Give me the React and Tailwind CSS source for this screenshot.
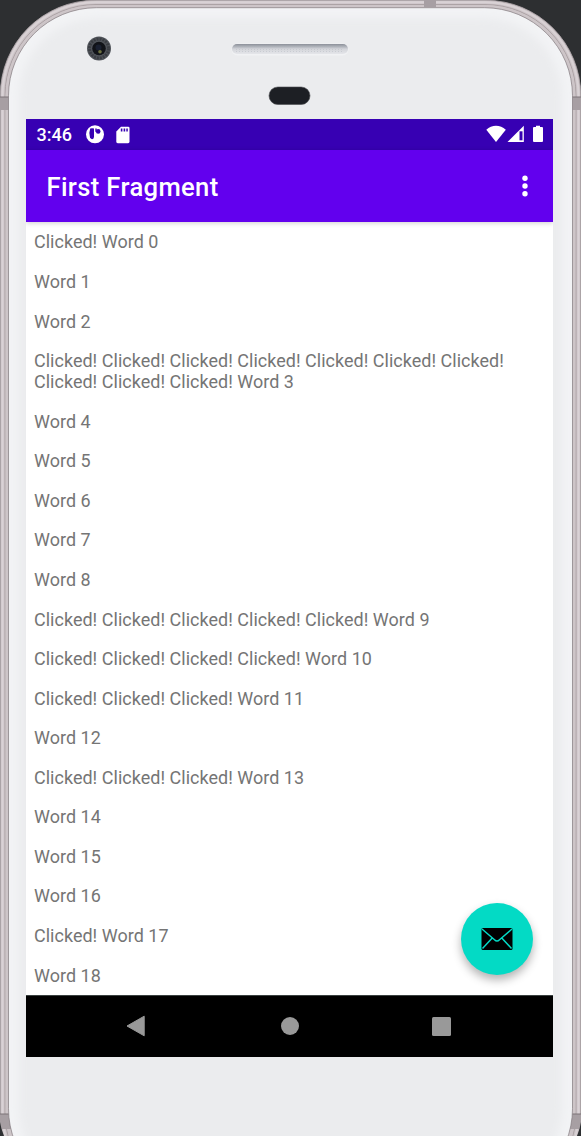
import React from "react";

const click = (n) => "Clicked! ".repeat(n);
const counts = [1, 0, 0, 10, 0, 0, 0, 0, 0, 5, 4, 3, 0, 3, 0, 0, 0, 1, 0];

function DeviceFrame() {
  return (
    <svg className="absolute inset-0" width="581" height="1136" viewBox="0 0 581 1136" aria-hidden="true">
      <defs>
        <filter id="soft" x="-10%" y="-10%" width="120%" height="120%">
          <feGaussianBlur stdDeviation="4" />
        </filter>
        <linearGradient id="speaker" x1="0" x2="0" y1="0" y2="1">
          <stop offset="0" stopColor="#8c9099" />
          <stop offset=".3" stopColor="#b4b8bf" />
          <stop offset=".5" stopColor="#d3d5da" />
          <stop offset="1" stopColor="#e5e6ea" />
        </linearGradient>
        <clipPath id="faceClip">
          <rect x="9" y="8" width="563" height="1188" rx="88" />
        </clipPath>
      </defs>
      <rect width="581" height="1136" fill="#2d2f31" />
      <rect x="0.3" y="0.3" width="580.4" height="1208" rx="95" fill="#cdc5c8" stroke="#b3a9ad" strokeWidth=".8" />
      <rect x="2.5" y="2.3" width="576" height="1204" rx="93" fill="none" stroke="#d9d2d5" strokeWidth="2" />
      <rect x="5" y="4.5" width="571" height="1199" rx="91" fill="none" stroke="#9d9397" strokeWidth=".7" />
      <rect x="6.5" y="6" width="568" height="1196" rx="90" fill="none" stroke="#cdc5c8" strokeWidth="1.6" />
      <path d="M0 97h9v13H0zM572 97h9v13h-9zM0 1114h10l3 15H0zM571 1114h10v15h-13zM424 0h12v7h-12z" fill="#a79fa3" />
      <path d="M0 97h9M572 97h9M0 1114h10M571 1114h10" stroke="#7d7478" />
      <path d="M0 1122q1 7 4 14H0zM581 1122q-1 7-4 14h4z" fill="#2d2f31" />
      <rect x="8.5" y="7.7" width="564" height="1189" rx="88" fill="#f2f3f5" stroke="#81787c" strokeWidth=".7" />
      <g clipPath="url(#faceClip)">
        <rect x="19" y="18" width="543" height="1168" rx="79" fill="#ebecee" filter="url(#soft)" />
      </g>
      <circle cx="99" cy="48.5" r="12" fill="#50545a" />
      <circle cx="99" cy="48.5" r="9.5" fill="none" stroke="#3b3e43" strokeWidth="3" strokeDasharray="2 1" />
      <circle cx="99" cy="48.5" r="6.8" fill="#111318" />
      <circle cx="98.5" cy="47.5" r="3" fill="#1a2030" />
      <circle cx="100" cy="51.8" r="1.8" fill="#6d7140" />
      <rect x="231.5" y="43.5" width="117" height="12" rx="6" fill="#f1f2f4" />
      <rect x="232" y="44" width="116" height="10" rx="5" fill="url(#speaker)" />
      <path d="M236 49.5h108M236 51.5h108" stroke="#bec1c8" strokeDasharray="1 2" opacity=".6" />
      <rect x="269" y="87" width="41" height="17.5" rx="8.75" fill="#1d1f24" stroke="#4c4d51" strokeWidth=".6" />
    </svg>
  );
}

function StatusBar() {
  return (
    <header className="flex h-[31px] shrink-0 items-center bg-[#3700b3] text-white">
      <span className="ml-[10.5px] w-[48.5px] text-[18px] font-medium leading-[21px]">3:46</span>
      <svg className="-mt-px" width="20" height="20" viewBox="0 0 20 20">
        <circle cx="10" cy="10.3" r="9" fill="white" />
        <path d="M5.2 4.6Q6.8 3.9 9 4.5V13q-.3 2.2-2 2.2-1.5-.2-2-1.6Q3.6 9 5.2 4.6z" fill="#3700b3" />
        <path d="M10.3 4.5h1.4v3.2h-1.4z" fill="#3700b3" />
        <circle cx="13.2" cy="7.4" r="2.3" fill="#3700b3" />
      </svg>
      <svg className="ml-[11px]" width="14" height="18" viewBox="0 0 14 18">
        <path d="M5 .7h7.2q1.3 0 1.3 1.3v13.8q0 1.4-1.4 1.4H1.7Q.3 17.2.3 15.8V5.6z" fill="white" />
        <path d="M4.8 2.5h1.6v3H4.8zM7.6 2.5h1.6v3H7.6zM10.3 2.5h1.5v3h-1.5z" fill="#3700b3" />
      </svg>
      <svg className="-mt-px ml-auto mr-[9px]" width="58" height="18" viewBox="0 0 58 18">
        <path d="M.3 4.7C5.8-.5 14.2-.5 19.8 4.7L10 17z" fill="white" />
        <path d="M21.5 17 37.8.7V17z" fill="white" />
        <path d="M33.5 6.3h3v9h-3z" fill="#3700b3" />
        <path d="M47 3q0-1 1-1h2V.8h4V2h2q1 0 1 1v13q0 1-1 1h-8q-1 0-1-1z" fill="white" />
      </svg>
    </header>
  );
}

export default function App() {
  return (
    <div className="relative h-[1136px] w-[581px] overflow-hidden bg-[#2d2f31] font-[Roboto,sans-serif]">
      <DeviceFrame />
      <div className="relative flex h-full flex-col pl-[26px] pr-7 pt-[119px]">
        <div className="relative flex h-[938px] w-[527px] flex-col overflow-hidden bg-white">
          <StatusBar />
          <div className="z-10 flex h-[71.5px] shrink-0 items-center bg-[#6200ee] pl-[20.5px] pr-[24px] text-white shadow-[0_1px_5px_rgba(0,0,0,0.2)]">
            <h1 className="pt-[2px] text-[25.6px] font-medium leading-[30px] tracking-[0.35px]">First Fragment</h1>
            <svg className="ml-auto" width="8" height="24" viewBox="0 0 8 24" fill="white">
              <circle cx="4" cy="4.2" r="2.7" />
              <circle cx="4" cy="12" r="2.7" />
              <circle cx="4" cy="19.8" r="2.7" />
            </svg>
          </div>
          <ul className="min-h-0 flex-1 overflow-hidden pt-[0.7px] text-[17.95px] leading-[21px] tracking-[0.04px] text-[#757575]">
            {counts.map((count, i) => (
              <li key={i} className="py-[9.29px] pl-2 pr-[30px]">
                {click(count)}Word {i}
              </li>
            ))}
          </ul>
          <nav className="flex h-[62px] shrink-0 items-center border-t border-[#39403f] bg-black">
            <svg className="-mt-px ml-[100px]" width="20" height="22" viewBox="0 0 20 22">
              <path d="M1 11 18.2 1.2V20.8z" fill="#999" stroke="#999" strokeLinejoin="round" />
            </svg>
            <div className="-mt-px ml-[134.5px] size-[18px] rounded-full bg-[#999]" />
            <div className="-mt-px ml-[133px] size-[19px] rounded-[1.5px] bg-[#999]" />
          </nav>
          <button aria-label="Send mail" className="absolute bottom-[82px] right-[20.5px] flex size-[72px] items-center justify-center rounded-full bg-[#03dac5] shadow-[0_5px_10px_rgba(0,0,0,0.3)]">
            <svg width="32" height="22" viewBox="0 0 32 22">
              <rect x=".5" y="0" width="31" height="22" rx="1.5" fill="black" />
              <path d="M1 1 13.5 11.7Q16 14.2 18.5 11.7L31 1M1.5 20.5 11 10.2M30.5 20.5 21 10.2" fill="none" stroke="#03dac5" strokeWidth="1.5" />
            </svg>
          </button>
        </div>
      </div>
    </div>
  );
}
